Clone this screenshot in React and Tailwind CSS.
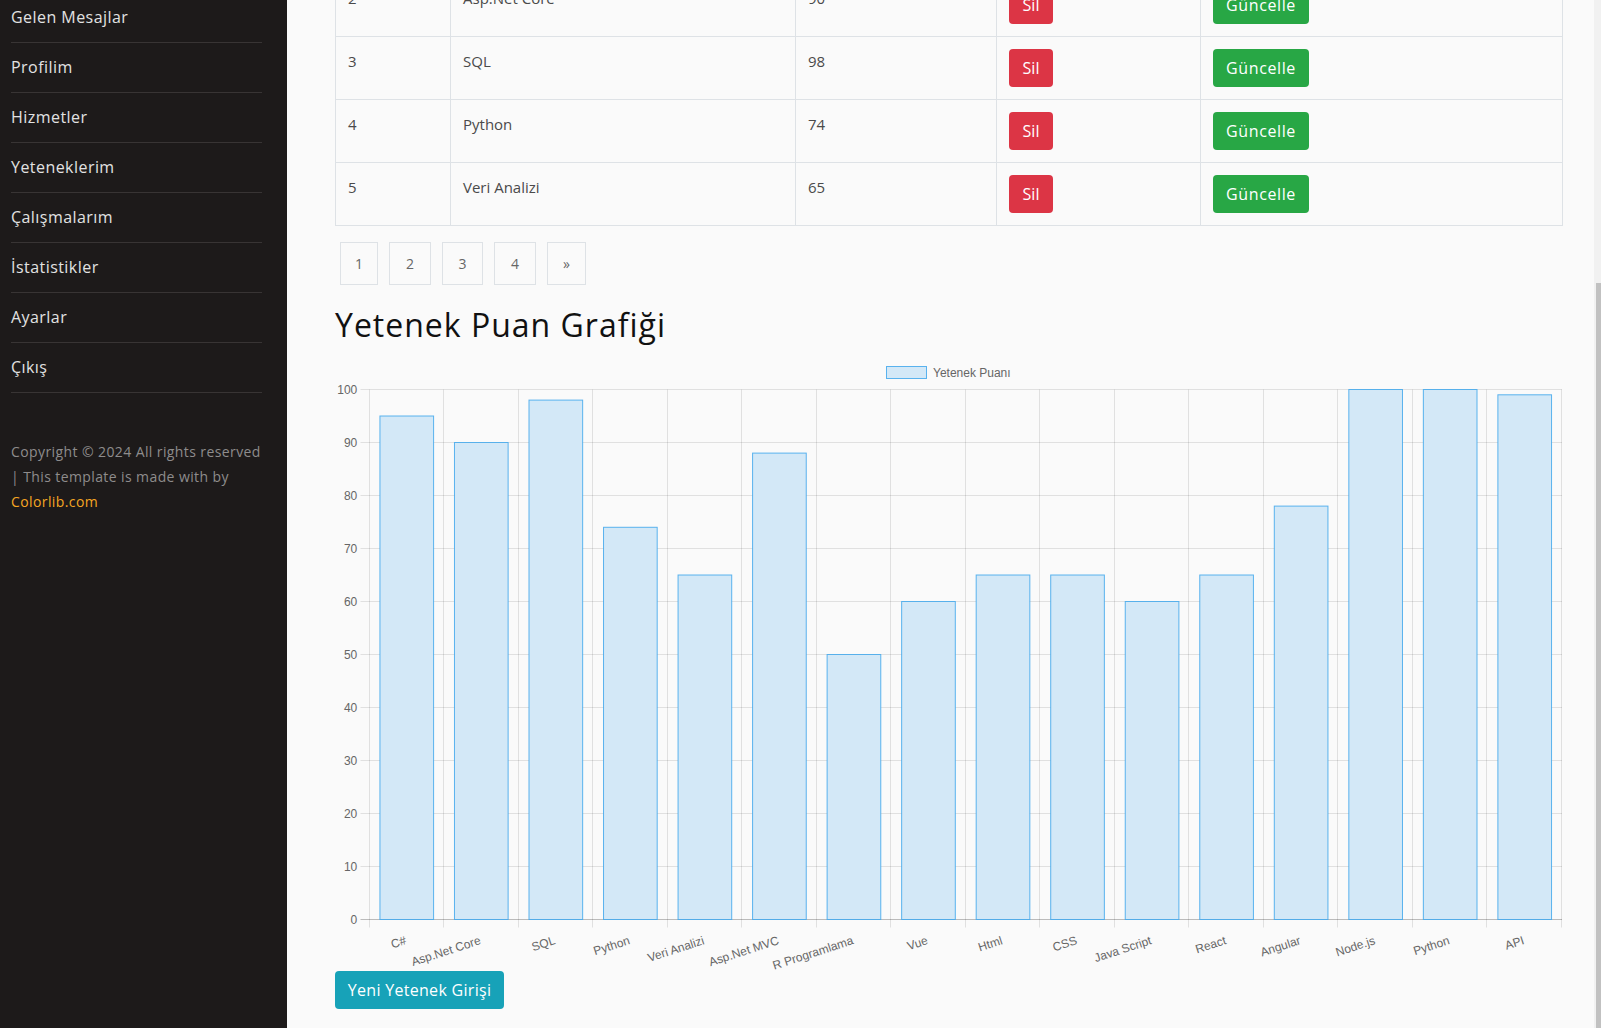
import React from "react";

const menu = ["Gelen Mesajlar", "Profilim", "Hizmetler", "Yeteneklerim", "Çalışmalarım", "İstatistikler", "Ayarlar", "Çıkış"];

const rows = [
    { id: 2, name: "Asp.Net Core", score: 90 },
    { id: 3, name: "SQL", score: 98 },
    { id: 4, name: "Python", score: 74 },
    { id: 5, name: "Veri Analizi", score: 65 },
];

const skills = [
    ["C#", 95], ["Asp.Net Core", 90], ["SQL", 98], ["Python", 74], ["Veri Analizi", 65],
    ["Asp.Net MVC", 88], ["R Programlama", 50], ["Vue", 60], ["Html", 65], ["CSS", 65],
    ["Java Script", 60], ["React", 65], ["Angular", 78], ["Node.js", 100], ["Python", 100], ["API", 99],
];

const poppins = { fontFamily: '"Open Sans", "Liberation Sans", sans-serif' };

// chart geometry (canvas 1227 wide)
const AX = 34.5;
const STEP = 74.53;
const ZERO = 567.5;
const UNIT = 5.3;

const Chart = () => {
    const ticks = [0, 10, 20, 30, 40, 50, 60, 70, 80, 90, 100];
    return (
        <svg width="1227" height="619" className="block" style={{ fontFamily: '"Liberation Sans", Arial, sans-serif' }}>
            {/* legend */}
            <rect x="551.5" y="14.5" width="40" height="12" fill="#d3e8f7" stroke="rgba(54,162,235,0.8)" />
            <text x="598" y="21" fontSize="12" fill="#666" dominantBaseline="central">Yetenek Puanı</text>

            {/* horizontal grid */}
            {ticks.map((v) => {
                const y = Math.round(567 - v * UNIT) + 0.5;
                return (
                    <g key={v}>
                        <line x1="25.5" x2="1227" y1={y} y2={y} stroke={v === 0 ? "rgba(0,0,0,0.25)" : "rgba(0,0,0,0.1)"} />
                        <text x="22.3" y={y} fontSize="12" fill="#666" textAnchor="end" dominantBaseline="central">{v}</text>
                    </g>
                );
            })}

            {/* vertical grid */}
            {Array.from({ length: 17 }).map((_, i) => {
                const x = Math.floor(34 + i * STEP) + 0.5;
                return <line key={i} x1={x} x2={x} y1="37.5" y2="575.5" stroke="rgba(0,0,0,0.1)" />;
            })}

            {/* bars */}
            {skills.map(([label, v], i) => {
                const cx = AX + (i + 0.5) * STEP;
                const w = 53.66;
                const top = ZERO - v * UNIT;
                return (
                    <rect key={i} x={cx - w / 2} y={top} width={w} height={ZERO - top} fill="#d3e8f7" stroke="rgba(54,162,235,0.8)" strokeWidth="1" />
                );
            })}

            {/* x labels */}
            {skills.map(([label], i) => {
                const px = AX + (i + 0.5) * STEP - 1;
                const py = 588;
                return (
                    <text key={i} x={px} y={py} fontSize="12" fill="#666" textAnchor="end" dominantBaseline="central" transform={`rotate(-18 ${px} ${py})`}>
                        {label}
                    </text>
                );
            })}
        </svg>
    );
};

const Sidebar = () => (
    <aside className="w-[287px] shrink-0 bg-[#1d1a1a] pl-[11px] pr-[25px]" style={poppins}>
        <ul className="-mt-[7px]">
            {menu.map((m) => (
                <li key={m} className="pt-[12px] pb-[13px] border-b border-[#383434] text-[16px] leading-6 tracking-[0.45px] text-[#e2e2e2]">
                    {m}
                </li>
            ))}
        </ul>
        <p className="mt-[46px] text-[14px] leading-[25px] tracking-[0.4px] text-[#8e8c8c] whitespace-nowrap">
            Copyright © 2024 All rights reserved
            <br />| This template is made with by
            <br />
            <span className="text-[#f5a623]">Colorlib.com</span>
        </p>
    </aside>
);

export default function App() {
    return (
        <div className="relative flex h-[1028px] overflow-hidden bg-[#fafafa]">
            <Sidebar />

            <main className="flex-1 pl-[48px] pr-[39px]" style={poppins}>
                <div className="-mt-[27px]">
                    <table className="w-[1227px] table-fixed border-collapse text-[15px] text-[#4a4a4a]">
                        <colgroup>
                            <col className="w-[115px]" />
                            <col className="w-[345px]" />
                            <col className="w-[201px]" />
                            <col className="w-[204px]" />
                            <col className="w-[362px]" />
                        </colgroup>
                        <tbody>
                            {rows.map((r) => (
                                <tr key={r.id}>
                                    <td className="border border-[#dee2e6] p-3 align-top leading-6">{r.id}</td>
                                    <td className="border border-[#dee2e6] p-3 align-top leading-6">{r.name}</td>
                                    <td className="border border-[#dee2e6] p-3 align-top leading-6">{r.score}</td>
                                    <td className="border border-[#dee2e6] p-3 align-top">
                                        <button className="flex h-[38px] w-[44px] items-center justify-center rounded-[4px] bg-[#dc3545] text-[16px] text-white">
                                            Sil
                                        </button>
                                    </td>
                                    <td className="border border-[#dee2e6] p-3 align-top">
                                        <button className="flex h-[38px] w-[96px] items-center justify-center rounded-[4px] bg-[#28a745] text-[16px] tracking-[0.6px] text-white">
                                            Güncelle
                                        </button>
                                    </td>
                                </tr>
                            ))}
                        </tbody>
                    </table>

                    <div className="mt-[16px] flex gap-[11px] pl-[5px] text-[14px] text-[#666]">
                        {[["1", "w-[38px]"], ["2", "w-[42px]"], ["3", "w-[41px]"], ["4", "w-[42px]"], ["»", "w-[39px]"]].map(([t, w]) => (
                            <span key={t} className={`flex h-[43px] items-center justify-center border border-[#dee2e6] ${w}`}>
                                {t}
                            </span>
                        ))}
                    </div>

                    <h2 className="mt-[21px] text-[32px] leading-[38px] font-normal tracking-[1px] text-[#111]">Yetenek Puan Grafiği</h2>

                    <div className="mt-[8px]">
                        <Chart />
                    </div>

                    <button className="flex h-[38px] w-[169px] items-center justify-center rounded-[4px] bg-[#17a2b8] text-[16px] tracking-[0.3px] text-white">
                        Yeni Yetenek Girişi
                    </button>
                </div>
            </main>

            <div className="absolute right-0 top-0 h-full w-[7px] bg-[#f1f1f1]">
                <div className="absolute right-0 top-[283px] bottom-0 w-[5px] bg-[#c1c1c1]" />
            </div>
        </div>
    );
}
